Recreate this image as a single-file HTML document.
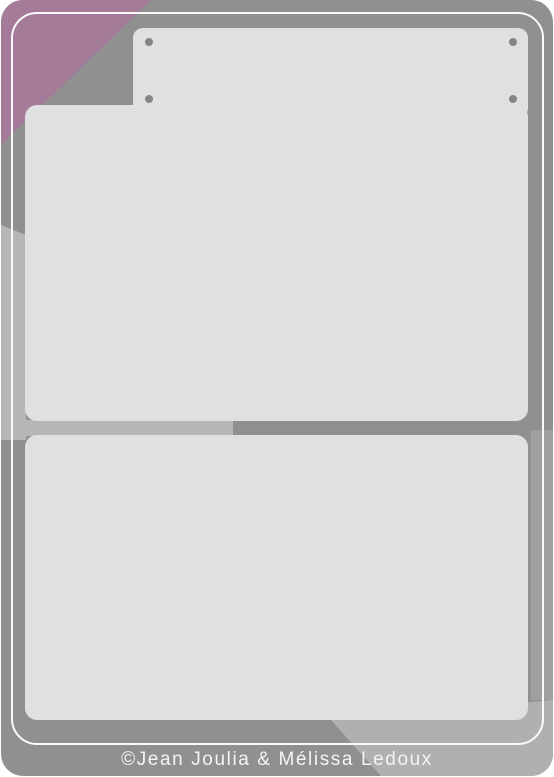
<!DOCTYPE html>
<html><head><style>
html,body{margin:0;padding:0;background:#fff;}
body{width:554px;height:777px;position:relative;overflow:hidden;font-family:"Liberation Sans",sans-serif;}
.card{position:absolute;left:1px;top:0;width:552px;height:776px;border-radius:22px;background:#909090;overflow:hidden;}
.p{position:absolute;background:#e0e0e0;}
.dot{position:absolute;width:8px;height:8px;border-radius:50%;background:#858585;}
.line{position:absolute;left:11px;top:12px;width:529px;height:729px;border:2px solid #fafafa;border-radius:26px;}
.txt{position:absolute;left:0;width:554px;top:749px;text-align:center;color:#f4f4f4;font-size:19px;letter-spacing:1.6px;}
</style></head><body>
<div class="card">
<svg width="552" height="776" style="position:absolute;left:0;top:0">
<polygon points="0,0 150,0 0,145" fill="#a57b9a"/>
<polygon points="0,225 25,235 25,440 0,440" fill="#b6b6b6"/>
<polygon points="0,420 232,420 232,436 0,436" fill="#b6b6b6"/>
<polygon points="330,720 552,700 552,776 380,776" fill="#b0b0b0"/>
<polygon points="530,430 552,430 552,700 530,700" fill="#a0a0a0"/>
</svg>
</div>
<div class="p" style="left:133px;top:28px;width:395px;height:90px;border-radius:10px"></div>
<div class="p" style="left:25px;top:105px;width:503px;height:316px;border-radius:12px"></div>
<div class="p" style="left:25px;top:435px;width:503px;height:285px;border-radius:12px"></div>
<div class="dot" style="left:145px;top:38px"></div>
<div class="dot" style="left:509px;top:38px"></div>
<div class="dot" style="left:145px;top:95px"></div>
<div class="dot" style="left:509px;top:95px"></div>
<div class="line"></div>
<div class="txt">©Jean Joulia &amp; Mélissa Ledoux</div>
</body></html>
